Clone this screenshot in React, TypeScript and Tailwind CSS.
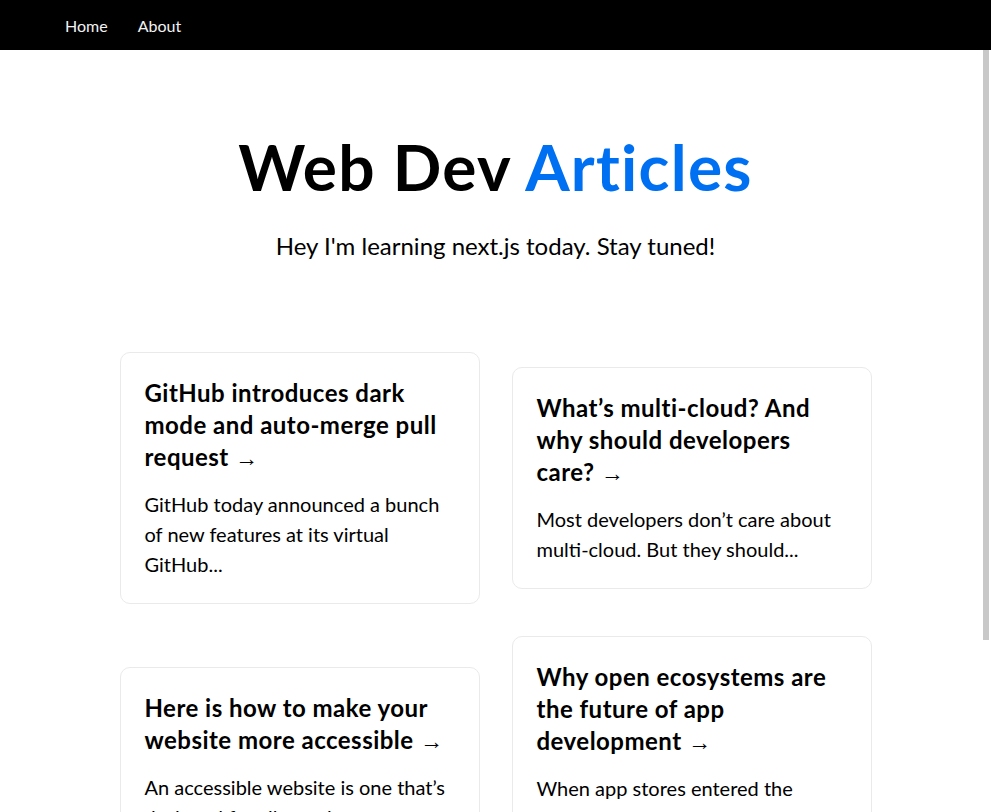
const articles = [
  {
    title: "GitHub introduces dark mode and auto-merge pull request",
    excerpt: "GitHub today announced a bunch of new features at its virtual GitHub...",
  },
  {
    title: "What’s multi-cloud? And why should developers care?",
    excerpt: "Most developers don’t care about multi-cloud. But they should...",
  },
  {
    title: "Here is how to make your website more accessible",
    excerpt: "An accessible website is one that’s designed for all people...",
  },
  {
    title: "Why open ecosystems are the future of app development",
    excerpt:
      "When app stores entered the mainstream, some developers saw a chance to build...",
  },
];

export default function App() {
  return (
    <div className="relative h-[812px] overflow-hidden bg-white text-black font-['Lato','Open_Sans',sans-serif]">
      {/* nav */}
      <nav className="flex h-[50px] items-center bg-black px-[50px] pt-px">
        <a href="#" className="px-[15px] text-base text-[#f2f2f2]">
          Home
        </a>
        <a href="#" className="px-[15px] text-base text-[#f2f2f2]">
          About
        </a>
      </nav>

      <main className="flex flex-col items-center py-20">
        <h1 className="m-0 text-center text-[64px] font-bold leading-[1.15] tracking-[0.02em]">
          Web Dev <span className="text-[#0070f3]">Articles</span>
        </h1>
        <p className="my-6 text-center text-2xl leading-[1.5]">
          Hey I'm learning next.js today. Stay tuned!
        </p>

        {/* article cards */}
        <div className="mt-12 flex w-full max-w-[800px] flex-wrap items-center justify-center">
          {articles.map((a) => (
            <a
              key={a.title}
              href="#"
              className="m-4 basis-[45%] rounded-[10px] border border-[#eaeaea] p-6 text-left"
            >
              <h3 className="mb-4 text-2xl font-bold leading-8 tracking-[0.02em]">
                {a.title}{" "}
                <span className="font-['Liberation_Sans',sans-serif] text-[23px] font-bold leading-none">
                  &rarr;
                </span>
              </h3>
              <p className="text-xl leading-[30px]">{a.excerpt}</p>
            </a>
          ))}
        </div>
      </main>

      {/* overlay scrollbar */}
      <div className="absolute right-[2px] top-[50px] h-[590px] w-[6px] bg-[#c8c8c8]" />
    </div>
  );
}
